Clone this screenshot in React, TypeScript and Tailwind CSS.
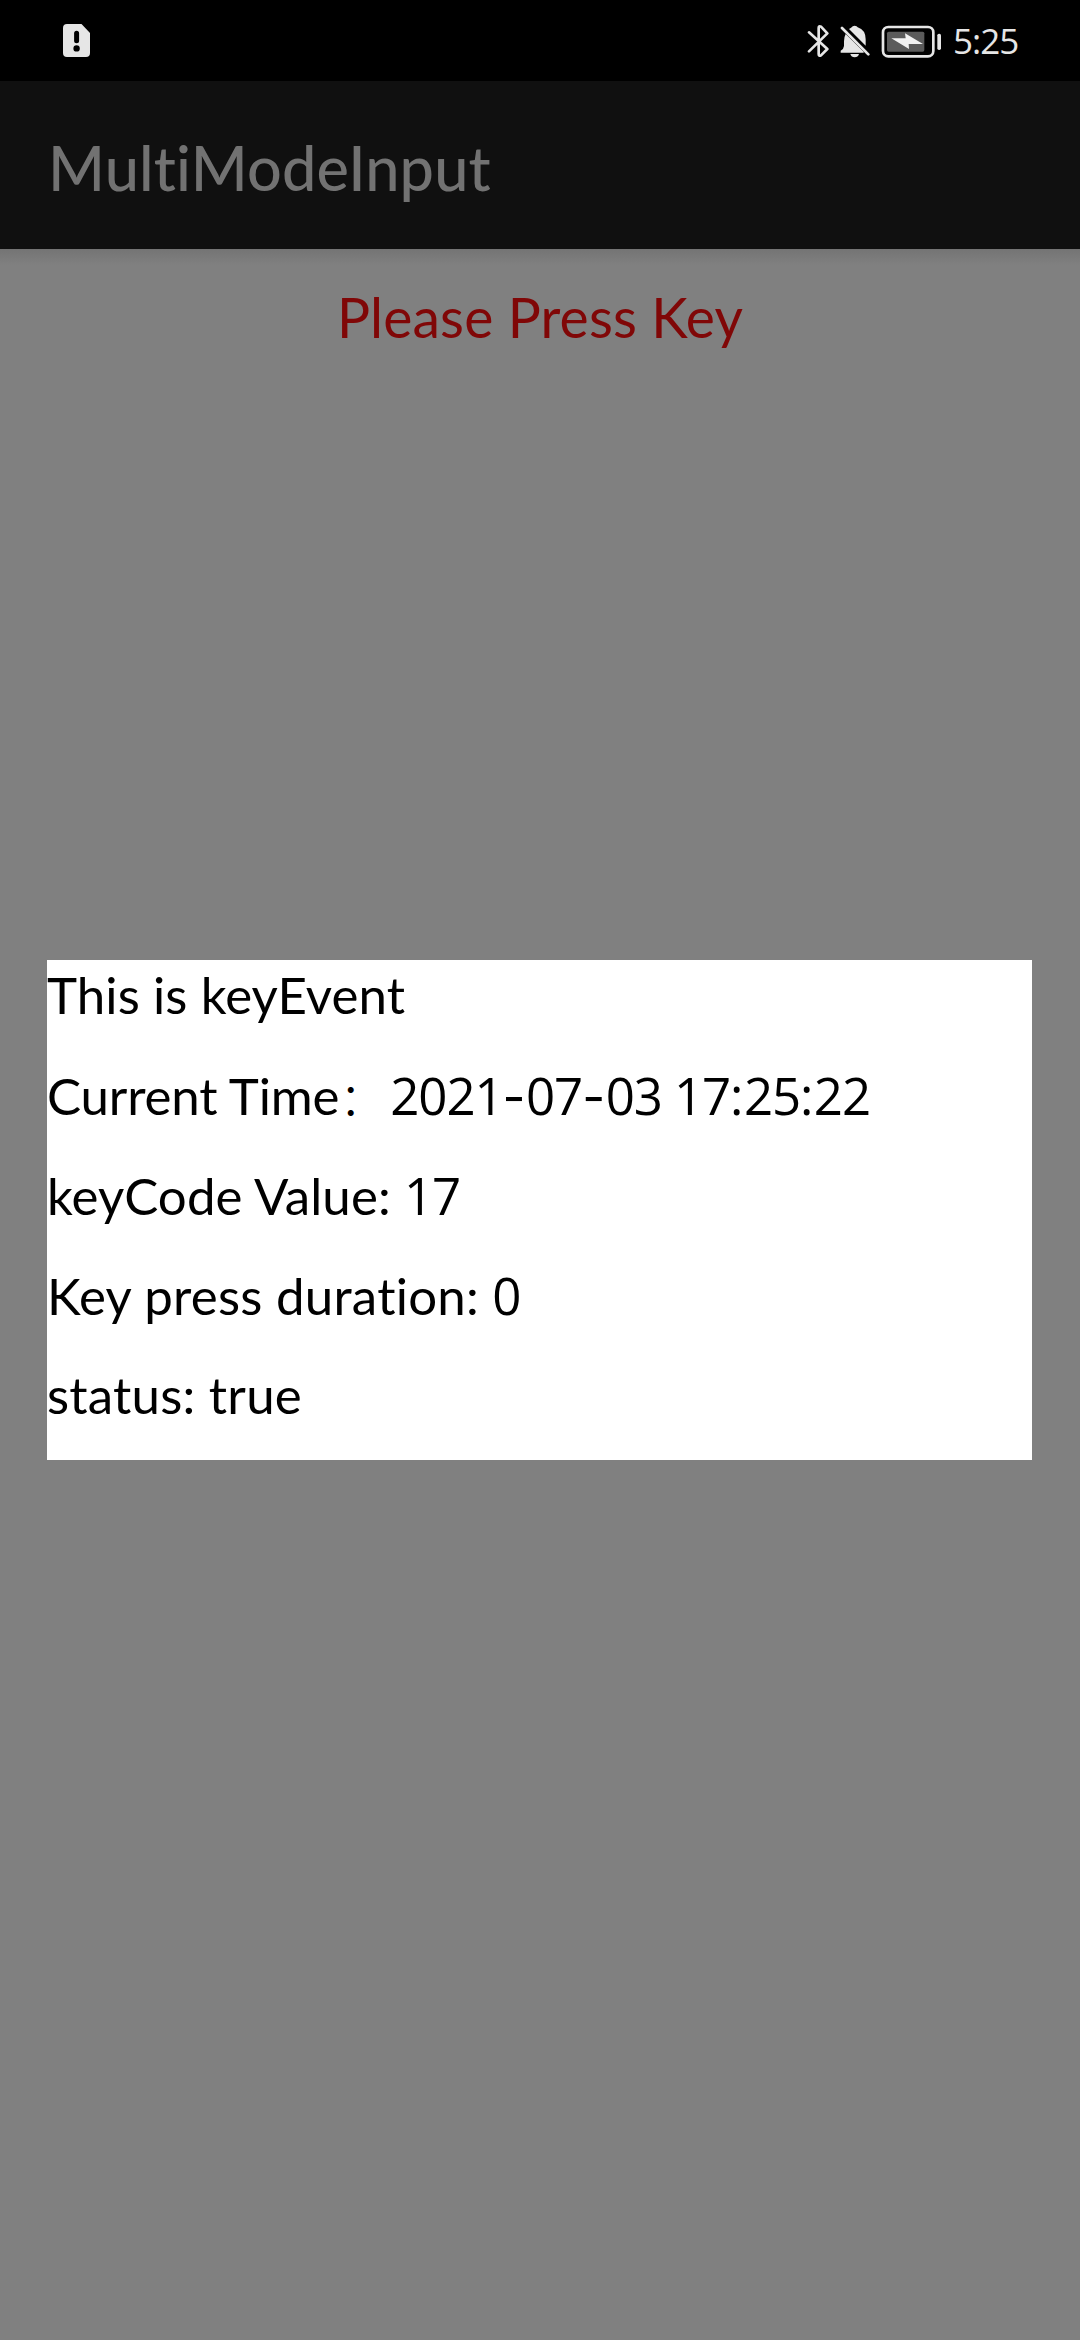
import type { ReactNode } from "react";

function SimAlertIcon() {
  return (
    <svg className="h-[33px] w-[27px]" viewBox="0 0 27 33">
      <path
        fill="#e6e6e6"
        fillRule="evenodd"
        d="M4 0H18.5L27 9V29a4 4 0 0 1-4 4H4a4 4 0 0 1-4-4V4a4 4 0 0 1 4-4ZM13.6 6.7a2.5 2.5 0 0 0-2.5 2.5v7.6a2.5 2.5 0 0 0 5 0V9.2a2.5 2.5 0 0 0-2.5-2.5ZM13.6 21.2a3.2 3.2 0 1 0 0 6.4a3.2 3.2 0 0 0 0-6.4Z"
      />
    </svg>
  );
}

function BluetoothIcon() {
  return (
    <svg className="h-[34px] w-[22px]" viewBox="0 0 66 102">
      <path
        d="M6 25L61 75L42 94Q35 98 35 90V12Q35 4 42 8L61 28L6 82"
        fill="none"
        stroke="#e6e6e6"
        strokeWidth="8"
        strokeLinecap="round"
        strokeLinejoin="round"
      />
    </svg>
  );
}

function BellOffIcon() {
  return (
    <svg className="h-[34px] w-[30px]" viewBox="0 0 90 102">
      <g fill="#e6e6e6">
        <path d="M17 30L71 83V86H2V80Q11 76 12 66V52Q12 39 17 30Z" />
        <path d="M27 15Q33 12 35 10Q37 5 44 5Q51 5 53 10Q77 18 77 46V65Z" />
        <path d="M31 90H57Q54 100 44 100Q34 100 31 90Z" />
      </g>
      <path d="M6 12L85 91" stroke="#e6e6e6" strokeWidth="8" strokeLinecap="round" />
    </svg>
  );
}

function BatteryChargingIcon() {
  return (
    <svg className="h-[34px] w-[61px]" viewBox="0 0 183 102">
      <rect x="6" y="9" width="151" height="88" rx="16" fill="none" stroke="#e6e6e6" strokeWidth="8" />
      <rect x="18" y="23" width="112" height="60" rx="5" fill="#5b5b5b" />
      <path d="M31 43L74 43L72 28L126 60L83 60L84 75Z" fill="#f2f2f2" />
      <rect x="169" y="29" width="11" height="49" rx="5" fill="#e6e6e6" />
    </svg>
  );
}

function Row({ children }: { children: ReactNode }) {
  return <p className="h-[100px] whitespace-pre pt-[4px] leading-[62px]">{children}</p>;
}

function Digits({ children }: { children: ReactNode }) {
  return <span className="font-['Open_Sans',sans-serif] tracking-[-1.1px]">{children}</span>;
}

function Hyphen() {
  return <span className="inline-block w-[23.5px] font-[Inter,sans-serif] text-[50px] leading-none">-</span>;
}

export default function App() {
  return (
    <div className="flex h-[2340px] w-[1080px] flex-col bg-[#808080] font-[Lato,sans-serif] [font-variant-ligatures:none]">
      <div className="flex h-[81px] shrink-0 items-center justify-between bg-black pr-[62px] pl-[63px]">
        <SimAlertIcon />
        <div className="flex items-center">
          <BluetoothIcon />
          <span className="w-[11px]" />
          <BellOffIcon />
          <span className="w-[11px]" />
          <BatteryChargingIcon />
          <span className="ml-[11px] w-[65px] pt-[2px] font-['Open_Sans',sans-serif] text-[35px] tracking-[-0.96px] whitespace-nowrap text-[#e6e6e6]">
            5:25
          </span>
        </div>
      </div>

      <header className="flex h-[168px] shrink-0 items-center bg-[#101010] pt-[6px] pl-[48px]">
        <h1 className="text-[61.2px] leading-[72px] font-medium tracking-[0.15px] text-[#727272]">MultiModeInput</h1>
      </header>

      <main className="flex grow flex-col">
        <div className="h-[16px] bg-linear-to-b from-[#747474] to-[#808080]" />
        <p className="mt-[17px] h-[70px] text-center text-[55.2px] leading-[70px] tracking-[0.15px] text-[#800707]">
          Please Press Key
        </p>

        <section className="mt-[608px] ml-[47px] h-[500px] w-[985px] bg-white text-[51px] text-black">
          <Row>
            <span className="tracking-[0.1px]">This is keyEvent</span>
          </Row>
          <Row>
            <span className="tracking-[-0.15px]">Current Time</span>
            <span className="inline-block w-[51px] font-['Noto_Sans_CJK_SC',sans-serif] text-[46px] leading-none font-light">
              ：
            </span>
            <Digits>
              2021
              <Hyphen />
              07
              <Hyphen />
              03 17<span className="tracking-[0.4px]">:</span>25<span className="tracking-[0.4px]">:</span>22
            </Digits>
          </Row>
          <Row>
            <span className="tracking-[0.1px]">keyCode Value: </span>
            <Digits>17</Digits>
          </Row>
          <Row>
            <span className="tracking-[0.25px]">Key press duration: </span>
            <Digits>0</Digits>
          </Row>
          <Row>
            <span className="tracking-[0.23px]">status: true</span>
          </Row>
        </section>
      </main>
    </div>
  );
}
